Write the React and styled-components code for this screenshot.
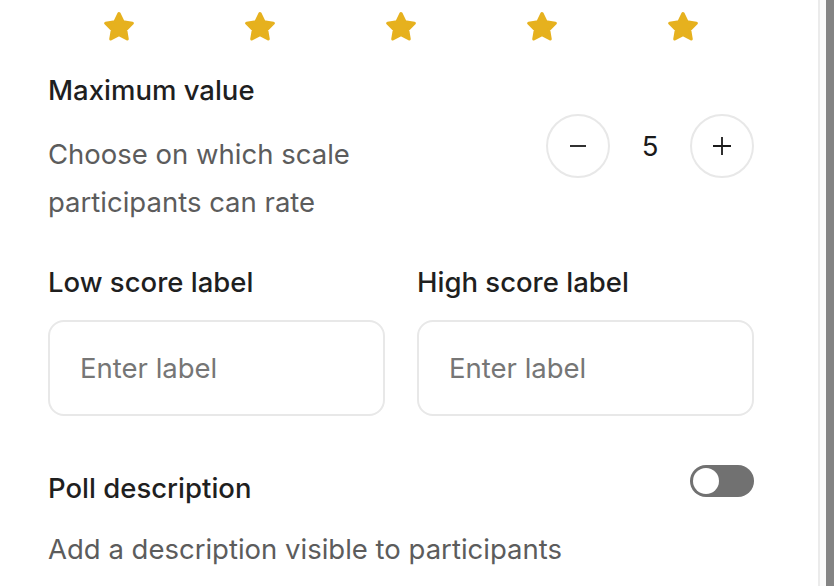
import React, { useState } from 'react';
import styled, { createGlobalStyle } from 'styled-components';

const GlobalStyle = createGlobalStyle`
    * { box-sizing: border-box; }
    html, body {
        margin: 0;
        padding: 0;
        background: #ffffff;
        font-family: Inter, "Noto Sans", sans-serif;
        overflow: hidden;
    }
`

const Page = styled.div`
    display: flex;
    width: 834px;
    height: 586px;
    overflow: hidden;
`
const Panel = styled.div`
    width: 820px;
    height: 100%;
    border-right: 2px solid #ebebeb;
    padding: 10px 64px 0 48px;
    display: flex;
    flex-direction: column;
`
const ScrollTrack = styled.div`
    flex: 1;
    display: flex;
    background: #f9f9f9;
    padding-left: 6px;
`
const ScrollThumb = styled.div`
    flex: 1;
    background: #838383;
`
const StarRow = styled.div`
    display: grid;
    grid-template-columns: repeat(5, 1fr);
    justify-items: center;
    height: 32px;
`
const Section = styled.div`
    display: flex;
    justify-content: space-between;
    align-items: flex-start;
`
const Title = styled.p`
    margin: 0;
    font-size: 27.5px;
    font-weight: 500;
    color: #1f1f1f;
    line-height: 32px;
`
const Hint = styled.p`
    margin: 0;
    font-size: 27.5px;
    color: #5c5c5c;
    line-height: 48px;
    max-width: ${p => p.$max || 'none'};
`
const Stepper = styled.div`
    display: flex;
    align-items: center;
`
const RoundButton = styled.button`
    width: 64px;
    height: 64px;
    border-radius: 50%;
    border: 2px solid #e8e8e8;
    background: #ffffff;
    display: flex;
    align-items: center;
    justify-content: center;
    padding: 0;
    cursor: pointer;
    color: #1a1a1a;
`
const StepValue = styled.span`
    width: 80px;
    text-align: center;
    font-size: 27.5px;
    color: #1a1a1a;
`
const LabelGrid = styled.div`
    display: grid;
    grid-template-columns: 1fr 1fr;
    column-gap: 32px;
`
const Field = styled.div`
    display: flex;
    flex-direction: column;
    gap: 22px;
`
const LabelInput = styled.input`
    width: 100%;
    height: 96px;
    border: 2px solid #e8e8e8;
    border-radius: 16px;
    padding: 0 30px;
    font-family: inherit;
    font-size: 27.5px;
    color: #1a1a1a;
    outline: none;
    &::placeholder { color: #767676; }
`
const Toggle = styled.button`
    width: 64px;
    height: 32px;
    border-radius: 16px;
    border: none;
    background: #717171;
    padding: 3px;
    display: flex;
    justify-content: ${p => p.$on ? 'flex-end' : 'flex-start'};
    cursor: pointer;
    margin-top: -7px;
`
const Knob = styled.span`
    width: 26px;
    height: 26px;
    border-radius: 50%;
    background: #ffffff;
`

const Star = () => (
    <svg width="34" height="34" viewBox="0 0 24 24" fill="#e6b11e" stroke="#e6b11e" strokeWidth="2.2" strokeLinejoin="round">
        <path d="M12 2.5l2.9 5.9 6.5.95-4.7 4.6 1.1 6.45L12 17.35l-5.8 3.05 1.1-6.45-4.7-4.6 6.5-.95z" />
    </svg>
)

export default function App() {
    const [max, setMax] = useState(5)
    const [on, setOn] = useState(false)

    return (
        <Page>
            <GlobalStyle />
            <Panel>
                <StarRow>
                    {Array.from({ length: max }).map((_, i) => <Star key={i} />)}
                </StarRow>
                <Title style={{ marginTop: 32 }}>{'Maximum value'}</Title>
                <Section style={{ marginTop: 6 }}>
                    <Hint $max="320px" style={{ marginTop: 18 }}>{'Choose on which scale participants can rate'}</Hint>
                    <Stepper style={{ marginTop: 2 }}>
                        <RoundButton type="button" onClick={() => setMax(Math.max(1, max - 1))}>
                            <svg width="20" height="20" viewBox="0 0 20 20" stroke="#1a1a1a" strokeWidth="1.8"><path d="M2 10h16" /></svg>
                        </RoundButton>
                        <StepValue>{max}</StepValue>
                        <RoundButton type="button" onClick={() => setMax(Math.min(10, max + 1))}>
                            <svg width="20" height="20" viewBox="0 0 20 20" stroke="#1a1a1a" strokeWidth="1.8"><path d="M1 10h18M10 1v18" /></svg>
                        </RoundButton>
                    </Stepper>
                </Section>
                <LabelGrid style={{ marginTop: 40 }}>
                    <Field>
                        <Title>{'Low score label'}</Title>
                        <LabelInput placeholder="Enter label" />
                    </Field>
                    <Field>
                        <Title>{'High score label'}</Title>
                        <LabelInput placeholder="Enter label" />
                    </Field>
                </LabelGrid>
                <Section style={{ marginTop: 56 }}>
                    <Title>{'Poll description'}</Title>
                    <Toggle type="button" $on={on} onClick={() => setOn(!on)}>
                        <Knob />
                    </Toggle>
                </Section>
                <Hint style={{ marginTop: 21 }}>{'Add a description visible to participants'}</Hint>
            </Panel>
            <ScrollTrack>
                <ScrollThumb />
            </ScrollTrack>
        </Page>
    );
}
